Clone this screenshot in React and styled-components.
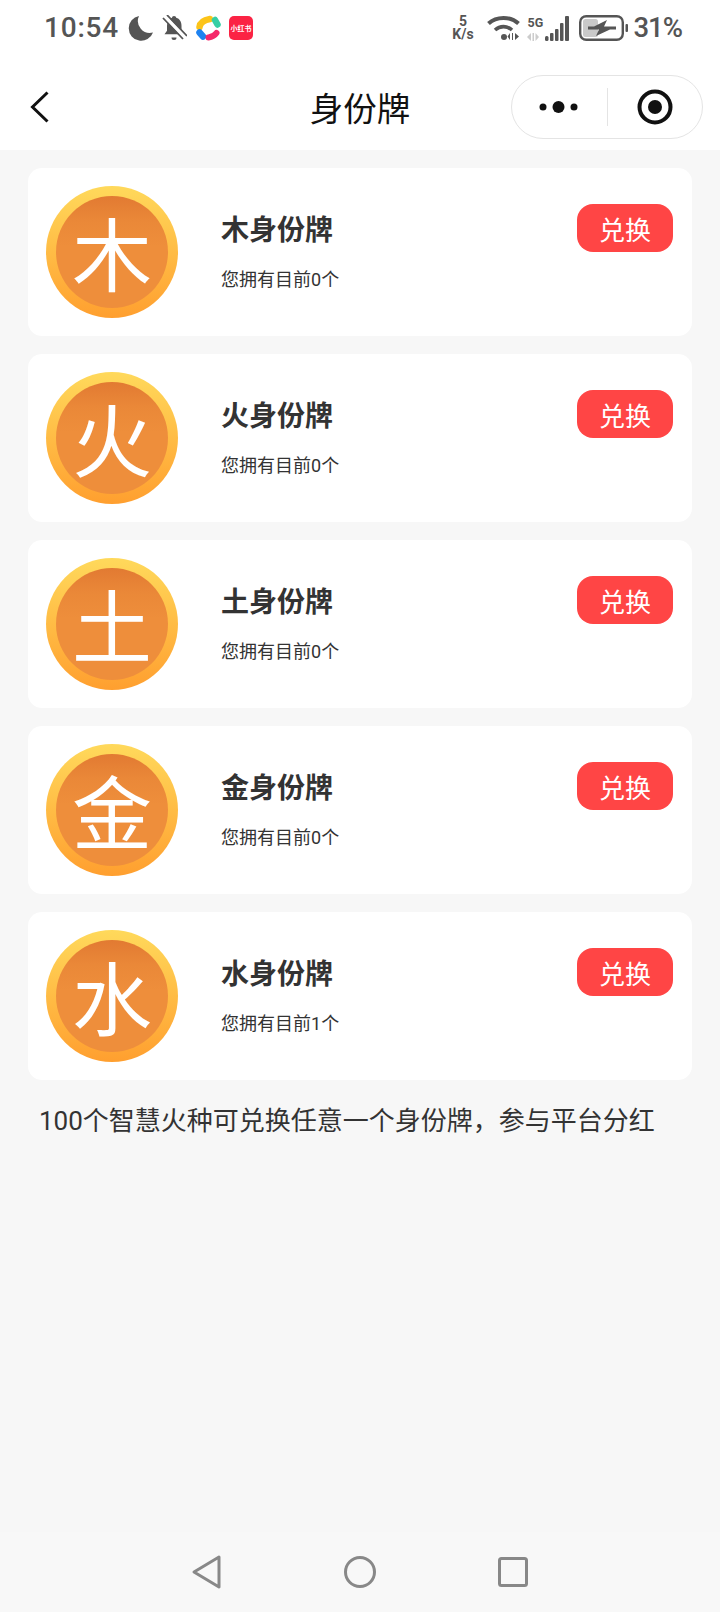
import styled, { createGlobalStyle } from 'styled-components';

const GlobalStyle = createGlobalStyle`
  html, body {
    margin: 0;
    padding: 0;
  }
  body {
    font-family: "Roboto", "Noto Sans CJK SC", sans-serif;
    background: #f7f7f7;
  }
`;

const Page = styled.div`
  width: 720px;
  height: 1612px;
  display: flex;
  flex-direction: column;
  background: #f7f7f7;
  overflow: hidden;
`;

const Header = styled.header`
  background: #fff;
  height: 150px;
  display: flex;
  flex-direction: column;
`;

const StatusBar = styled.div`
  height: 56px;
  padding: 0 38px 0 44px;
  box-sizing: border-box;
  display: flex;
  justify-content: space-between;
  align-items: center;
  color: #555;
`;

const StatusGroup = styled.div`
  display: flex;
  align-items: center;
  gap: ${(p) => p.$gap}px;
`;

const Clock = styled.span`
  font-size: 28px;
  font-weight: 500;
  letter-spacing: 0.8px;
  line-height: 30px;
  margin-right: 1px;
`;

const AppBadge = styled.span`
  width: 24px;
  height: 24px;
  border-radius: 5px;
  background: #fb2344;
  color: #fff;
  font-size: 7px;
  font-weight: 700;
  display: flex;
  align-items: center;
  justify-content: center;
  white-space: nowrap;
  overflow: hidden;
`;

const Speed = styled.div`
  width: 25px;
  display: flex;
  flex-direction: column;
  align-items: center;
  font-size: 14px;
  font-weight: 700;
  line-height: 13px;
  margin-right: 3px;
`;

const Net = styled.div`
  display: flex;
  align-items: flex-end;
  margin-left: -2px;
  margin-right: 1px;
`;

const NetType = styled.div`
  width: 18px;
  display: flex;
  flex-direction: column;
  align-items: flex-start;
  font-size: 12.5px;
  font-weight: 700;
  line-height: 12px;
  gap: 4px;
`;

const Percent = styled.span`
  font-size: 27.5px;
  font-weight: 500;
  letter-spacing: -1px;
  line-height: 30px;
  margin-left: -5px;
`;

const NavBar = styled.nav`
  flex: 1;
  display: grid;
  grid-template-columns: 1fr auto 1fr;
  align-items: center;
  padding: 8px 17px 0;
`;

const BackButton = styled.div`
  display: flex;
  align-items: center;
  padding-left: 13px;
`;

const PageTitle = styled.h1`
  margin: 0;
  font-size: 33.5px;
  font-weight: 400;
  color: #111;
  line-height: 44px;
  font-family: "Noto Sans CJK SC", sans-serif;
`;

const Capsule = styled.div`
  justify-self: end;
  width: 192px;
  height: 64px;
  box-sizing: border-box;
  border: 1px solid #e4e4e4;
  border-radius: 32px;
  display: grid;
  grid-template-columns: 1fr 1px 1fr;
  align-items: center;
  justify-items: center;
`;

const CapsuleDivider = styled.div`
  width: 1px;
  height: 38px;
  background: #e4e4e4;
`;

const Main = styled.main`
  flex: 1;
  padding: 18px 28px 0;
  display: flex;
  flex-direction: column;
  gap: 18px;
`;

const Card = styled.section`
  height: 168px;
  box-sizing: border-box;
  padding: 18px;
  background: #fff;
  border-radius: 14px;
  display: flex;
`;

const Coin = styled.div`
  width: 132px;
  height: 132px;
  flex: none;
  border-radius: 50%;
  background: linear-gradient(180deg, #ffd95b 0%, #ff9f2f 100%);
  display: flex;
  align-items: center;
  justify-content: center;
`;

const CoinFace = styled.div`
  width: 112px;
  height: 112px;
  border-radius: 50%;
  background: linear-gradient(180deg, #e27a32 0%, #ea8838 22%, #ee8e3b 45%, #ee8e3b 100%);
  color: #fff;
  font-size: 80px;
  line-height: 108px;
  text-align: center;
  font-family: "Noto Sans CJK SC", sans-serif;
  font-weight: 400;
`;

const Info = styled.div`
  flex: 1;
  margin-left: 43px;
`;

const InfoHead = styled.div`
  margin-top: 18px;
  display: flex;
  justify-content: space-between;
  align-items: center;
`;

const CardTitle = styled.h2`
  margin: 0;
  font-size: 28px;
  font-weight: 700;
  color: #333;
  font-family: "Noto Sans CJK SC", sans-serif;
  line-height: 36px;
`;

const ExchangeButton = styled.button`
  width: 96px;
  height: 48px;
  margin-right: 1px;
  border: none;
  border-radius: 16px;
  background: #ff4545;
  color: #fff;
  font-size: 26px;
  font-family: "Noto Sans CJK SC", sans-serif;
  padding: 0;
`;

const Owned = styled.p`
  margin: 17px 0 0;
  font-size: 18px;
  line-height: 22px;
  color: #333;
  font-family: "Roboto", "Noto Sans CJK SC", sans-serif;
`;

const Note = styled.p`
  margin: 6px 0 0 11px;
  font-size: 26px;
  line-height: 34px;
  color: #333;
  white-space: nowrap;
  font-family: "Roboto", "Noto Sans CJK SC", sans-serif;
`;

const BottomBar = styled.div`
  height: 80px;
  background: #f8f8f8;
  display: grid;
  grid-template-columns: repeat(3, 32px);
  justify-content: center;
  column-gap: 121px;
  align-items: center;
`;

const badges = [
  { element: '木', count: 0 },
  { element: '火', count: 0 },
  { element: '土', count: 0 },
  { element: '金', count: 0 },
  { element: '水', count: 1 },
];

const App = () => {
  return (
    <Page>
      <GlobalStyle />
      <Header>
        <StatusBar>
          <StatusGroup $gap={8}>
            <Clock>10:54</Clock>
            <svg width="26" height="26" viewBox="0 0 26 26">
              <path d="M11 1a12.500 12.500 0 1 0 14 16.500A12 12 0 0 1 11 1z" fill="#555" />
            </svg>
            <svg width="25" height="26" viewBox="0 0 25 26">
              <path d="M12 1c1.400 0 2 .8 2.200 1.800 3.600 1 5.300 4 5.300 8v5l2.500 3.500H2.500L5 15.800v-5c0-4 1.700-7 5-8C10.200 1.800 10.700 1 12 1z" fill="#555" />
              <path d="M9.500 22.500h5a2.500 2.500 0 0 1-5 0z" fill="#555" />
              <path d="M3 1.500l20 21" stroke="#fff" strokeWidth="4" />
              <path d="M1 3l20 21M5 0l20 21" stroke="#555" strokeWidth="1.800" />
            </svg>
            <svg width="26" height="26" viewBox="0 0 26 26" fill="none" strokeLinecap="round">
              <path d="M4.500 12C5 8 9 5 15 4" stroke="#fcc419" strokeWidth="6.500" />
              <path d="M20 5l2.500 4.500" stroke="#36cfa5" strokeWidth="6.500" />
              <path d="M4.500 17.500L8 21.500" stroke="#1e82f0" strokeWidth="6.500" />
              <path d="M13.500 22.500c3.500-.5 6-1.800 8-4.500" stroke="#f5286a" strokeWidth="6" />
            </svg>
            <AppBadge>小红书</AppBadge>
          </StatusGroup>
          <StatusGroup $gap={9}>
            <Speed>
              <div>5</div>
              <div>K/s</div>
            </Speed>
            <svg width="33" height="26" viewBox="0 0 33 26" fill="none" stroke="#555">
              <path d="M1.500 8.500c8-7.500 22-7.500 30 0" strokeWidth="4" />
              <path d="M8 15c5-4.500 12-4.500 17 0" strokeWidth="3.600" />
              <circle cx="17" cy="22" r="3" fill="#555" stroke="none" />
              <path d="M23 18v7l-2.500-3.500zM25 18h1v7h-1zM28 18l4 3.500-4 3.500z" fill="#555" stroke="none" />
            </svg>
            <Net>
              <NetType>
                <span>5G</span>
                <svg width="15" height="8" viewBox="0 0 15 8" fill="#ccc">
                  <path d="M4 0v8L0 4zM5.500 0h1.500v8H5.500zM8.500 0l3.500 4-3.500 4z" />
                </svg>
              </NetType>
              <svg width="24" height="25" viewBox="0 0 24 25" fill="#555">
                <rect x="0" y="20" width="3.500" height="5" rx="1.500" />
                <rect x="5" y="17" width="3.500" height="8" rx="1" />
                <rect x="10" y="13" width="3.500" height="12" rx="1" />
                <rect x="15" y="7" width="3.500" height="18" rx="1" />
                <rect x="20" y="0" width="4" height="25" rx="1" />
              </svg>
            </Net>
            <svg width="50" height="26" viewBox="0 0 50 26">
              <rect x="1.200" y="1.200" width="42.600" height="23.600" rx="6" fill="#fff" stroke="#555" strokeWidth="2.400" />
              <rect x="4" y="4" width="15" height="18" rx="2.500" fill="#c9c9c9" />
              <path d="M28 5L15 11.500H9V14.500H20L17 21L31 14.500H37V11.500H25z" fill="#555" />
              <rect x="46.500" y="9" width="2.500" height="8" rx="1" fill="#555" />
            </svg>
            <Percent>31%</Percent>
          </StatusGroup>
        </StatusBar>
        <NavBar>
          <BackButton>
            <svg width="20" height="32" viewBox="0 0 20 32" fill="none">
              <path d="M17.500 1.500L2.500 16l15 14.500" stroke="#111" strokeWidth="3" />
            </svg>
          </BackButton>
          <PageTitle>身份牌</PageTitle>
          <Capsule>
            <svg width="44" height="16" viewBox="0 0 44 16" fill="#111">
              <circle cx="6" cy="8" r="3.500" />
              <circle cx="21.500" cy="8" r="6" />
              <circle cx="37" cy="8" r="3.500" />
            </svg>
            <CapsuleDivider />
            <svg width="36" height="36" viewBox="0 0 36 36" fill="none">
              <circle cx="18" cy="18" r="15.500" stroke="#111" strokeWidth="4" />
              <circle cx="18" cy="18" r="7" fill="#111" />
            </svg>
          </Capsule>
        </NavBar>
      </Header>
      <Main>
        {badges.map((b) => (
          <Card key={b.element}>
            <Coin>
              <CoinFace>{b.element}</CoinFace>
            </Coin>
            <Info>
              <InfoHead>
                <CardTitle>{b.element}身份牌</CardTitle>
                <ExchangeButton>兑换</ExchangeButton>
              </InfoHead>
              <Owned>您拥有目前{b.count}个</Owned>
            </Info>
          </Card>
        ))}
        <Note>{'100个智慧火种可兑换任意一个身份牌\uFF0C参与平台分红'}</Note>
      </Main>
      <BottomBar>
        <svg width="32" height="36" viewBox="0 0 32 36" fill="none">
          <path d="M28 3L3 18l25 15z" stroke="#888" strokeWidth="3" strokeLinejoin="round" />
        </svg>
        <svg width="32" height="32" viewBox="0 0 32 32" fill="none">
          <circle cx="16" cy="16" r="14.500" stroke="#888" strokeWidth="3" />
        </svg>
        <svg width="32" height="32" viewBox="0 0 32 32" fill="none">
          <rect x="2.500" y="2.500" width="27" height="27" rx="2" stroke="#888" strokeWidth="3" />
        </svg>
      </BottomBar>
    </Page>
  );
};

export default App;
